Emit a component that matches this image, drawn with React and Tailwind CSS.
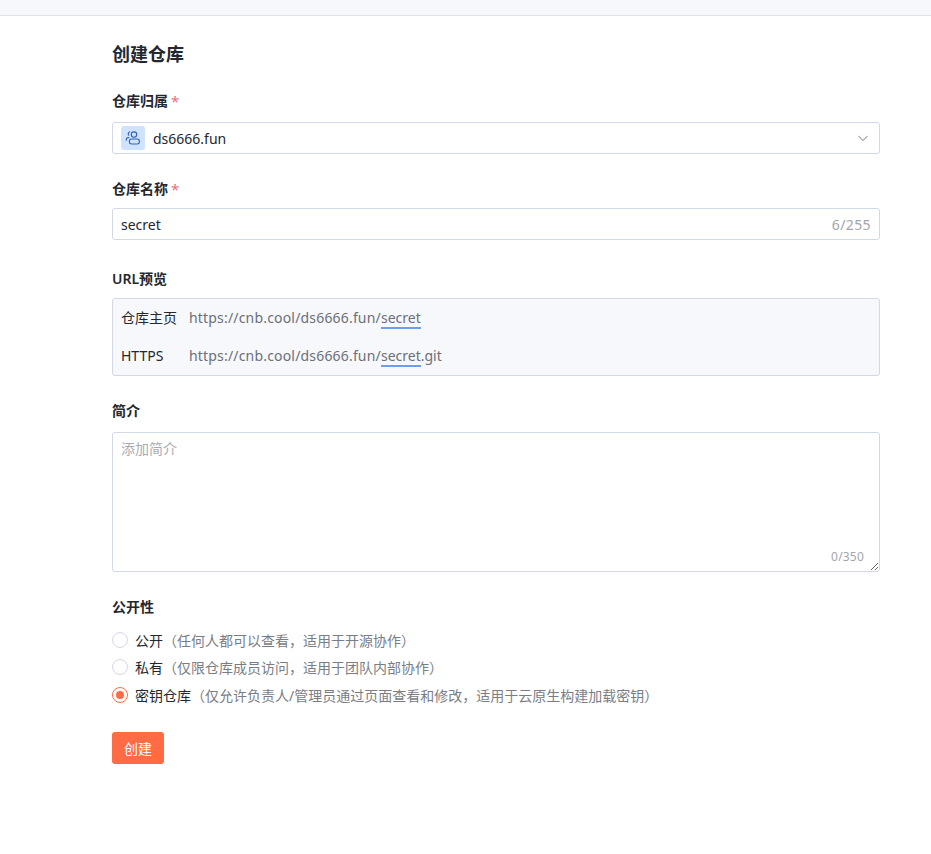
const font = { fontFamily: '"Noto Sans", "Noto Sans CJK SC", sans-serif' };

function Label({ children, required, className }) {
  return (
    <div className={`h-5 flex items-center text-[14px] font-semibold leading-5 text-[#24272e] ${className}`}>
      <span>{children}</span>
      {required && <span className="ml-[3px] text-[15px] font-normal text-[#e8727a]">*</span>}
    </div>
  );
}

function Radio({ checked, title, desc, className }) {
  return (
    <label className={`flex items-center h-5 text-[14px] ${className}`}>
      <span className={`w-4 h-4 rounded-full border flex items-center justify-center bg-white ${checked ? 'border-[#ff6b45]' : 'border-[#d5d9e6]'}`}>
        {checked && <span className="w-2 h-2 rounded-full bg-[#ff6b45]" />}
      </span>
      <span className="ml-[7px] text-[#24272e]">{title}</span>
      <span className="text-[#7a7d85]">{desc}</span>
    </label>
  );
}

export default function App() {
  return (
    <div className="min-h-[854px] bg-white" style={font}>
      <div className="h-4 bg-[#f7f8fc] border-b border-[#e2e4ec]" />
      <div className="w-[768px] ml-[112px]">
        <h1 className="mt-[24px] h-7 text-[18px] leading-7 font-semibold text-[#24272e]">创建仓库</h1>

        <Label required className="mt-[23px]">仓库归属</Label>
        <div className="mt-[11px] h-8 rounded-[3px] border border-[#d3d8e6] flex items-center pl-2 pr-[10px]">
          <span className="w-6 h-6 rounded-[3px] bg-[#cfe2ff] flex items-center justify-center">
            <svg width="16" height="16" viewBox="0 0 16 16" fill="none" stroke="#2f62b8" strokeWidth="1.1">
              <circle cx="9" cy="4.6" r="2.7" />
              <path d="M5.3 1.8a2.1 2.1 0 0 0-1.2 3.8" />
              <path d="M1.3 10.8V9.6c0-1.1.9-2 2-2h1" />
              <rect x="4.400" y="9" width="10" height="5" rx="2.200" />
            </svg>
          </span>
          <span className="ml-2 flex-1 text-[14px] text-[#24272e]">ds6666.fun</span>
          <svg width="12" height="12" viewBox="0 0 12 12" fill="none" stroke="#a9abb1" strokeWidth="1.1">
            <path d="M1.5 4l4.5 4.5L10.500 4" />
          </svg>
        </div>

        <Label required className="mt-[25px]">仓库名称</Label>
        <div className="mt-[9px] h-8 rounded-[3px] border border-[#d3d8e6] flex items-center justify-between px-2 text-[14px]">
          <span className="text-[#24272e]">secret</span>
          <span className="text-[#a3a5ab] tracking-[0.4px]">6/255</span>
        </div>

        <Label className="mt-[29px]">URL预览</Label>
        <div className="mt-[9px] h-[78px] rounded-[3px] border border-[#d3d8e6] bg-[#f7f8fc] px-2 pt-[6px] text-[14px]">
          <div className="flex items-center h-6">
            <span className="w-[68px] text-[#24272e]">仓库主页</span>
            <span className="text-[#6c6f78]"><span className="tracking-[0.18px]">https://cnb.cool/ds6666.fun/</span><span className="border-b-2 border-[#6d9cf0]">secret</span></span>
          </div>
          <div className="flex items-center h-6 mt-[14px]">
            <span className="w-[68px] text-[#24272e]">HTTPS</span>
            <span className="text-[#6c6f78]"><span className="tracking-[0.18px]">https://cnb.cool/ds6666.fun/</span><span className="border-b-2 border-[#6d9cf0]">secret</span>.git</span>
          </div>
        </div>

        <Label className="mt-[25px]">简介</Label>
        <div className="relative mt-[11px] h-[140px]">
          <textarea
            readOnly
            placeholder="添加简介"
            className="block w-full h-full rounded-[3px] border border-[#d3d8e6] px-2 py-[6px] text-[14px] leading-5 outline-none placeholder:text-[#a9abb1]"
          />
          <span className="absolute right-4 bottom-[7px] text-[12px] leading-4 tracking-[0.2px] text-[#a3a5ab]">0/350</span>
        </div>

        <Label className="mt-[25px]">公开性</Label>
        <Radio className="mt-[13px]" title="公开" desc="（任何人都可以查看，适用于开源协作）" />
        <Radio className="mt-[7px]" title="私有" desc="（仅限仓库成员访问，适用于团队内部协作）" />
        <Radio checked className="mt-[8px]" title="密钥仓库" desc="（仅允许负责人/管理员通过页面查看和修改，适用于云原生构建加载密钥）" />

        <button className="mt-[27px] block w-[52px] h-8 rounded-[3px] bg-[#ff6b45] text-white text-[14px]">创建</button>
      </div>
    </div>
  );
}
